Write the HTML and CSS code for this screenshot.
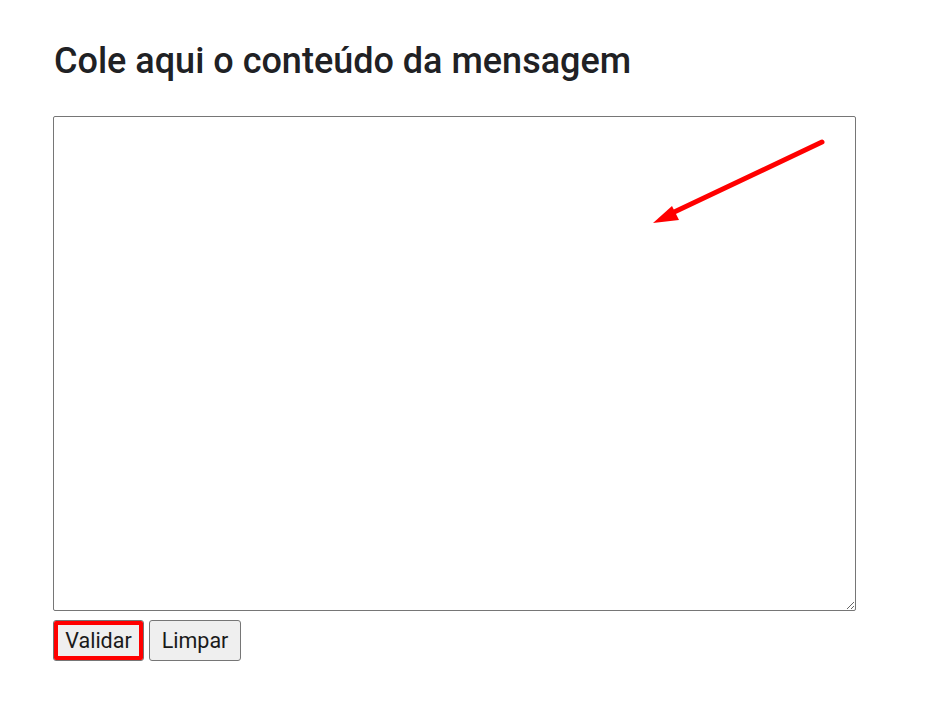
FILE: index.html
```html
<!DOCTYPE html>
<html lang="pt">
<head>
<meta charset="utf-8">
<title>Validar mensagem</title>
<link rel="stylesheet" href="styles.css">
</head>
<body>
<main class="page">
  <h1 class="title">Cole aqui o conteúdo da mensagem</h1>
  <textarea class="message"></textarea>
  <div class="actions">
    <button class="btn btn-highlight" type="button">Validar</button>
    <button class="btn" type="button">Limpar</button>
  </div>
  <svg class="arrow" width="200" height="100" viewBox="640 130 200 100" aria-hidden="true">
    <line x1="822" y1="142" x2="670" y2="214" stroke="#ff0000" stroke-width="5" stroke-linecap="round"/>
    <polygon points="653,223 672,206 679,220" fill="#ff0000"/>
  </svg>
</main>
</body>
</html>
```
FILE: styles.css
```css
html, body {
  margin: 0;
  padding: 0;
  background: #ffffff;
}
.page {
  position: relative;
  padding: 40px 0 0 54px;
  font-family: Roboto, "Liberation Sans", sans-serif;
  color: #202124;
}
.title {
  margin: 0 0 34px 0;
  font-size: 36px;
  font-weight: 500;
  line-height: 42px;
  color: #202124;
}
.message {
  display: block;
  box-sizing: border-box;
  width: 803px;
  height: 495px;
  margin: 0 0 0 -1px;
  border: 1px solid #767676;
  border-radius: 2px;
  background: #fff;
  resize: both;
}
.actions {
  display: flex;
  gap: 5px;
  margin-top: 9px;
  margin-left: -1px;
}
.btn {
  box-sizing: border-box;
  height: 41px;
  padding: 0;
  font-family: Roboto, "Liberation Sans", sans-serif;
  font-size: 21.5px;
  color: #1a1a1a;
  background: #efefef;
  border: 1px solid #767676;
  border-radius: 3px;
}
.btn-highlight {
  width: 91px;
  outline: 4px solid #ff0000;
  outline-offset: -5px;
}
.btn:last-child {
  width: 92px;
}
.arrow {
  position: absolute;
  left: 640px;
  top: 130px;
}
```
